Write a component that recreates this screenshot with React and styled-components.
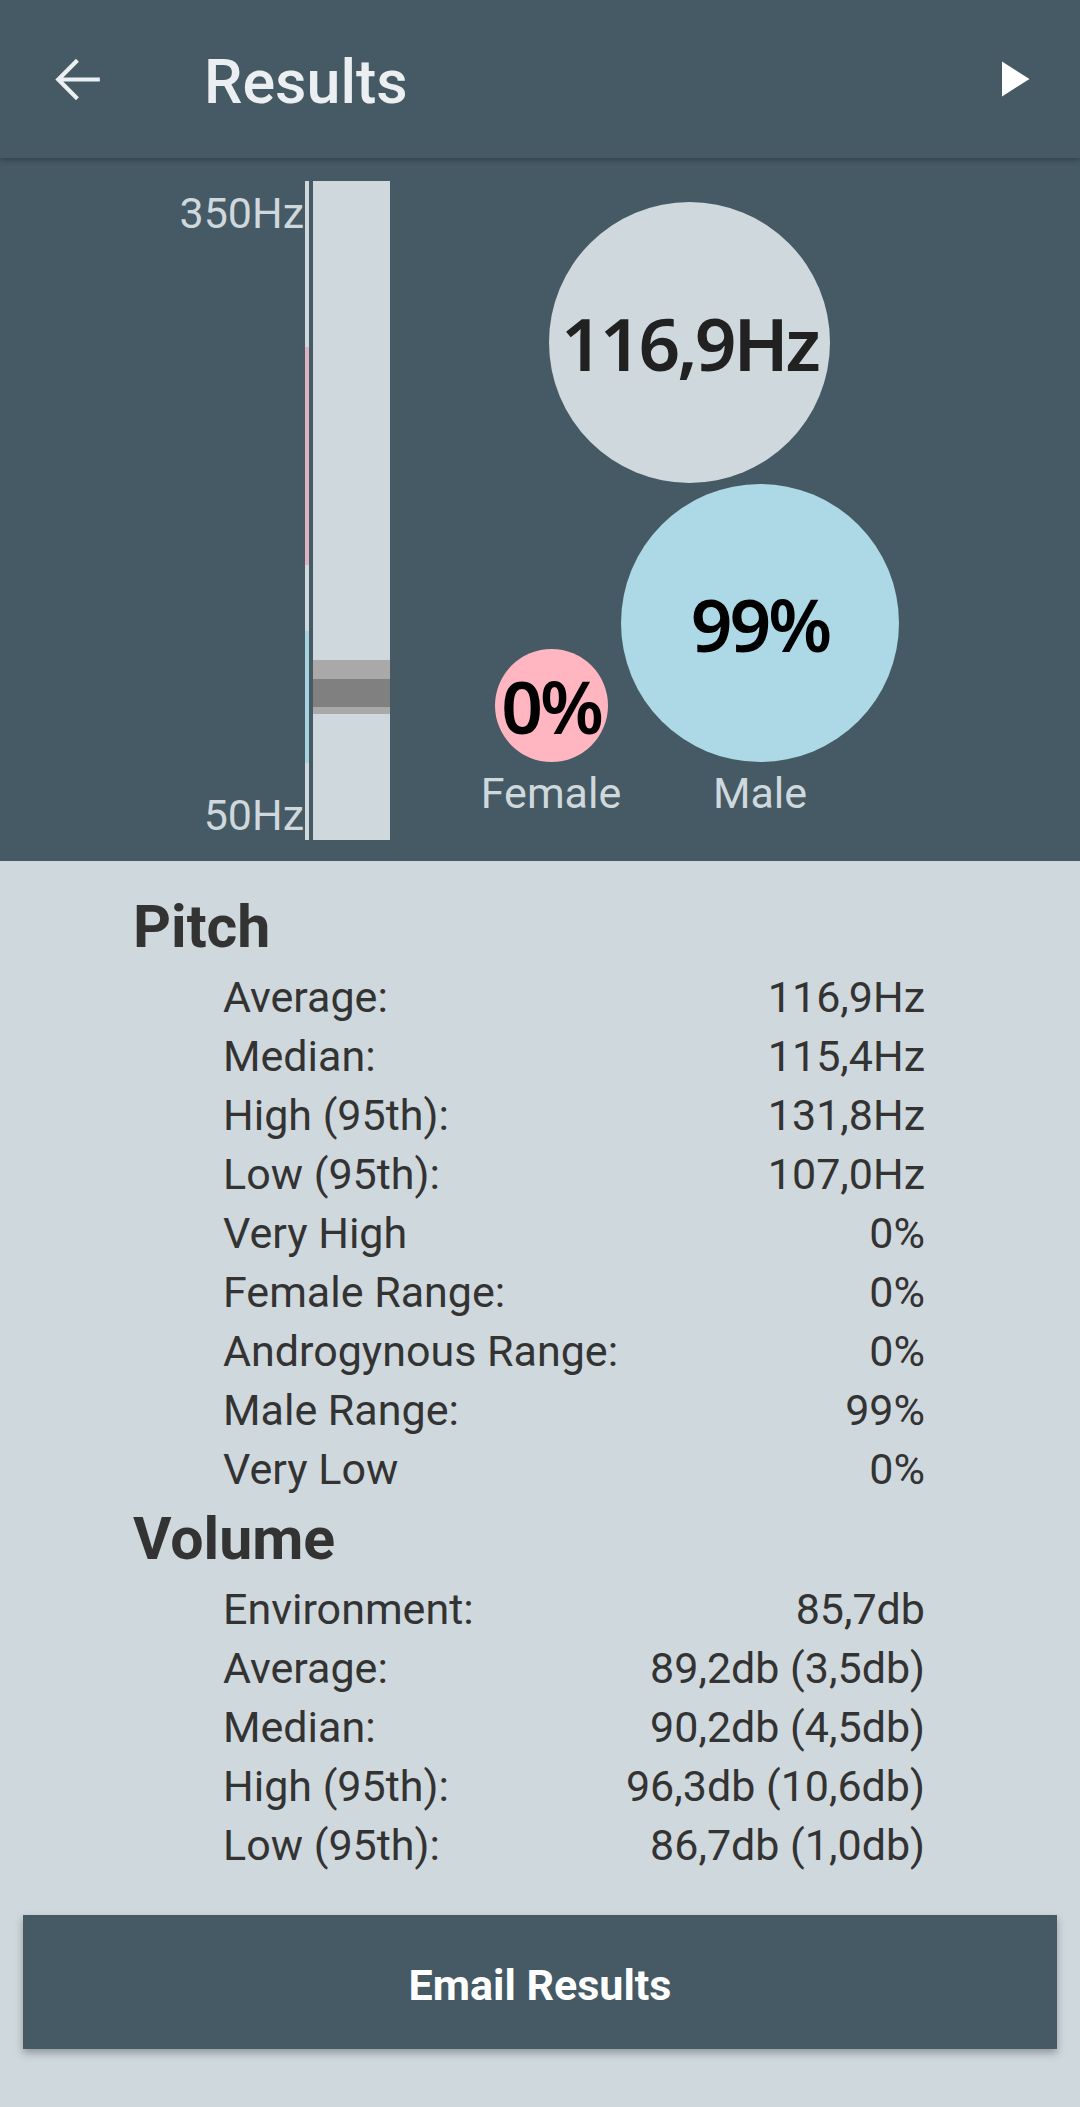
import styled, { createGlobalStyle } from "styled-components";

const GlobalStyle = createGlobalStyle`
  html, body {
    margin: 0;
    padding: 0;
    background: #cfd8dc;
    font-family: Roboto, "Liberation Sans", sans-serif;
  }
  * {
    box-sizing: border-box;
  }
`;

const Page = styled.div`
  display: flex;
  flex-direction: column;
  min-height: 100vh;
  background: #cfd8dc;
`;

const TopBar = styled.header`
  position: relative;
  z-index: 2;
  display: flex;
  align-items: center;
  height: 158px;
  background: #455a64;
  box-shadow: 0 2px 5px rgba(0, 0, 0, 0.28);
  color: #eceff1;
`;

const IconButton = styled.div`
  display: flex;
  align-items: center;
  justify-content: center;
  width: ${(p) => p.$size}px;
  height: ${(p) => p.$size}px;
  margin-left: ${(p) => p.$left || 0}px;
  margin-right: ${(p) => p.$right || 0}px;
`;

const Title = styled.h1`
  flex: 1;
  margin: 8px 0 0 93px;
  font-size: 61px;
  font-weight: 500;
  line-height: 1.172;
  color: #eceff1;
`;

const Panel = styled.section`
  display: flex;
  align-items: flex-start;
  height: 703px;
  padding-top: 23px;
  background: #455a64;
`;

const Scale = styled.div`
  display: flex;
  height: 659px;
  margin-left: 174px;
`;

const ScaleLabels = styled.div`
  display: flex;
  flex-direction: column;
  justify-content: space-between;
  width: 130px;
  padding-top: 7px;
  text-align: right;
  font-size: 43px;
  line-height: 1.172;
  color: #cfd8dc;
`;

const RangeLine = styled.div`
  display: flex;
  flex-direction: column;
  width: 4px;
  margin-left: 1px;
`;

const Bar = styled.div`
  display: flex;
  flex-direction: column;
  width: 77px;
  margin-left: 4px;
`;

const Segment = styled.div`
  height: ${(p) => p.$h}px;
  background: ${(p) => p.$color};
`;

const Bubbles = styled.div`
  display: flex;
  flex-direction: column;
  margin-left: 93px;
  margin-top: 21px;
`;

const Circle = styled.div`
  display: flex;
  align-items: center;
  justify-content: center;
  width: ${(p) => p.$d}px;
  height: ${(p) => p.$d}px;
  border-radius: 50%;
  background: ${(p) => p.$bg};
  color: ${(p) => p.$fg || "#000"};
  font-family: "Noto Sans", "Open Sans", sans-serif;
  font-weight: 600;
  font-size: 73px;
  letter-spacing: -3px;
  line-height: 1;
`;

const PitchCircle = styled(Circle)`
  margin-left: 66px;
`;

const GenderRow = styled.div`
  display: flex;
  align-items: flex-end;
  margin-top: 1px;
`;

const GenderCol = styled.div`
  display: flex;
  flex-direction: column;
  align-items: center;
  width: ${(p) => p.$w}px;
  margin-left: ${(p) => p.$left || 0}px;
`;

const GenderLabel = styled.div`
  margin-top: 6px;
  font-size: 43px;
  line-height: 1.172;
  color: #cfd8dc;
`;

const Stats = styled.main`
  flex: 1;
  display: flex;
  flex-direction: column;
  padding-top: 31px;
  color: #333333;
`;

const Section = styled.div`
  & + & {
    margin-top: 5px;
  }
`;

const Heading = styled.h2`
  margin: 0 0 6px 133px;
  font-size: 59px;
  font-weight: 700;
  line-height: 70px;
`;

const Row = styled.div`
  display: flex;
  justify-content: space-between;
  height: 59px;
  padding: 0 155px 0 223px;
  font-size: 43px;
  line-height: 59px;
`;

const EmailButton = styled.button`
  display: block;
  height: 134px;
  margin: 40px 23px 57px;
  padding-top: 6px;
  border: none;
  background: #455a64;
  color: #ffffff;
  font-family: Roboto, "Liberation Sans", sans-serif;
  font-size: 43px;
  font-weight: 700;
  box-shadow: 0 4px 8px rgba(0, 0, 0, 0.3);
`;

const pitchRows = [
  ["Average:", "116,9Hz"],
  ["Median:", "115,4Hz"],
  ["High (95th):", "131,8Hz"],
  ["Low (95th):", "107,0Hz"],
  ["Very High", "0%"],
  ["Female Range:", "0%"],
  ["Androgynous Range:", "0%"],
  ["Male Range:", "99%"],
  ["Very Low", "0%"],
];

const volumeRows = [
  ["Environment:", "85,7db"],
  ["Average:", "89,2db (3,5db)"],
  ["Median:", "90,2db (4,5db)"],
  ["High (95th):", "96,3db (10,6db)"],
  ["Low (95th):", "86,7db (1,0db)"],
];

// pixel heights of each piece, top to bottom
const rangeLine = [
  [166, "#cfd8dc"],
  [218, "#dcb3bf"],
  [66, "#cfd8dc"],
  [132, "#a9d2df"],
  [77, "#cfd8dc"],
];

const bar = [
  [479, "#cfd8dc"],
  [19, "#a9a9a9"],
  [28, "#808080"],
  [7, "#a9a9a9"],
  [126, "#cfd8dc"],
];

function StatSection({ title, rows }) {
  return (
    <Section>
      <Heading>{title}</Heading>
      {rows.map(([label, value]) => (
        <Row key={label}>
          <span>{label}</span>
          <span>{value}</span>
        </Row>
      ))}
    </Section>
  );
}

export default function App() {
  return (
    <Page>
      <GlobalStyle />
      <TopBar>
        <IconButton $size={67} $left={44}>
          <svg width="67" height="67" viewBox="0 0 24 24">
            <path
              fill="#eceff1"
              d="M20 11.25H6.9l5.6-5.6L11.45 4.6 4.05 12l7.4 7.4 1.05-1.05-5.6-5.6H20z"
            />
          </svg>
        </IconButton>
        <Title>Results</Title>
        <IconButton $size={60} $right={38}>
          <svg width="60" height="60" viewBox="0 0 24 24">
            <path fill="#ffffff" d="M8 5v14l11-7z" />
          </svg>
        </IconButton>
      </TopBar>

      <Panel>
        <Scale>
          <ScaleLabels>
            <span>350Hz</span>
            <span>50Hz</span>
          </ScaleLabels>
          <RangeLine>
            {rangeLine.map(([h, c], i) => (
              <Segment key={i} $h={h} $color={c} />
            ))}
          </RangeLine>
          <Bar>
            {bar.map(([h, c], i) => (
              <Segment key={i} $h={h} $color={c} />
            ))}
          </Bar>
        </Scale>

        <Bubbles>
          <PitchCircle $d={281} $bg="#cfd8dc" $fg="#212121">
            116,9Hz
          </PitchCircle>
          <GenderRow>
            <GenderCol $w={136}>
              <Circle $d={113} $bg="#ffb6c1">
                0%
              </Circle>
              <GenderLabel>Female</GenderLabel>
            </GenderCol>
            <GenderCol $w={278} $left={2}>
              <Circle $d={278} $bg="#add8e6">
                99%
              </Circle>
              <GenderLabel>Male</GenderLabel>
            </GenderCol>
          </GenderRow>
        </Bubbles>
      </Panel>

      <Stats>
        <StatSection title="Pitch" rows={pitchRows} />
        <StatSection title="Volume" rows={volumeRows} />
        <EmailButton>Email Results</EmailButton>
      </Stats>
    </Page>
  );
}
